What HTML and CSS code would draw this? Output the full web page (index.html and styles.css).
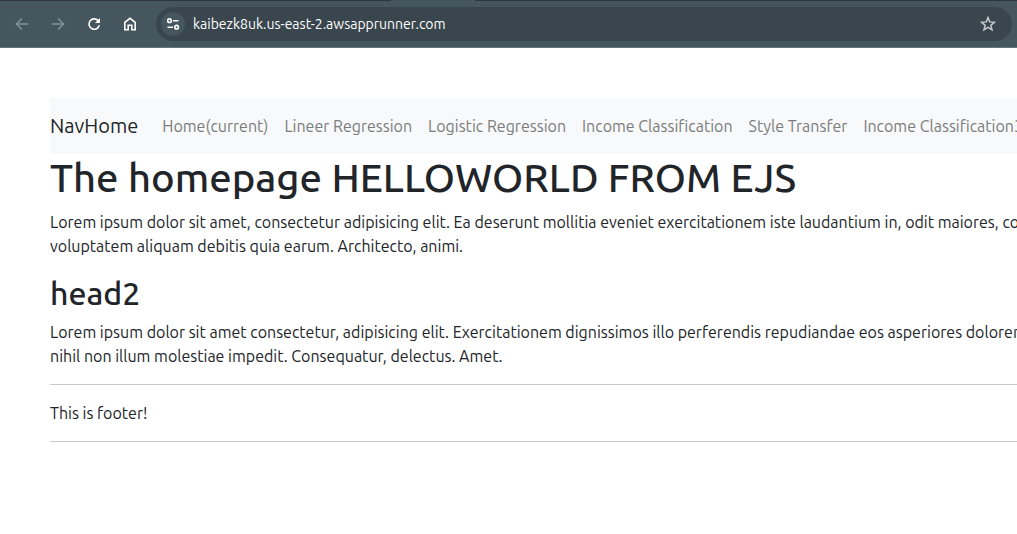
FILE: index.html
```html
<!DOCTYPE html>
<html lang="en">
<head>
<meta charset="utf-8">
<meta name="viewport" content="width=device-width, initial-scale=1">
<title>NavHome</title>
<link rel="stylesheet" href="styles.css">
</head>
<body>
<header class="browser">
  <div class="tab-strip"><div class="active-tab"></div></div>
  <div class="toolbar">
    <button class="tool dim" type="button" aria-label="Back"><svg viewBox="0 0 16 16"><path d="M14 8H3M8 2.5 2.5 8 8 13.5"/></svg></button>
    <button class="tool dim" type="button" aria-label="Forward"><svg viewBox="0 0 16 16"><path d="M2 8h11M8 2.5 13.500 8 8 13.500"/></svg></button>
    <button class="tool" type="button" aria-label="Reload"><svg viewBox="0 0 16 16"><path d="M13.300 9.200A5.200 5.200 0 1 1 11.900 4.400L13 5.500"/><path class="solid" d="M14 2v5H9z"/></svg></button>
    <button class="tool" type="button" aria-label="Home"><svg viewBox="0 0 16 16"><path d="M2.800 6.300 8 2.300l5.200 4v7.500H9.800V9.300H6.200v4.500H2.800z"/></svg></button>
    <div class="address">
      <button class="site-info" type="button" aria-label="Site information"><svg viewBox="0 0 16 16"><circle cx="4.500" cy="4.700" r="1.800"/><path d="M8 4.700h5.500M2.500 11.200H8"/><circle cx="11.600" cy="11.200" r="1.800"/></svg></button>
      <input class="url" type="text" aria-label="Address" value="kaibezk8uk.us-east-2.awsapprunner.com">
      <button class="star" type="button" aria-label="Bookmark"><svg viewBox="0 0 16 16"><path d="m8 1.600 1.700 4.300 4.700.400-3.600 3 1.200 4.600L8 11.400l-4 2.500 1.200-4.600-3.600-3 4.700-.400z"/></svg></button>
    </div>
  </div>
</header>
<div class="page">
  <nav class="navbar">
    <a class="brand" href="#">NavHome</a>
    <a class="nav-link" href="#">Home(current)</a>
    <a class="nav-link" href="#">Lineer Regression</a>
    <a class="nav-link" href="#">Logistic Regression</a>
    <a class="nav-link" href="#">Income Classification</a>
    <a class="nav-link" href="#">Style Transfer</a>
    <a class="nav-link" href="#">Income Classification3</a>
  </nav>
  <main>
    <h1 class="title">The homepage HELLOWORLD FROM EJS</h1>
    <p class="text">Lorem ipsum dolor sit amet, consectetur adipisicing elit. Ea deserunt mollitia eveniet exercitationem iste laudantium in, odit maiores, co<br>voluptatem aliquam debitis quia earum. Architecto, animi.</p>
    <h2 class="subtitle">head2</h2>
    <p class="text">Lorem ipsum dolor sit amet consectetur, adipisicing elit. Exercitationem dignissimos illo perferendis repudiandae eos asperiores dolorem<br>nihil non illum molestiae impedit. Consequatur, delectus. Amet.</p>
  </main>
  <footer class="footer">This is footer!</footer>
</div>
</body>
</html>
```
FILE: styles.css
```css
* {
  box-sizing: border-box;
}

body {
  margin: 0;
  background: #fff;
  color: #212529;
  font: 16px/24px Ubuntu, "Noto Sans", sans-serif;
  overflow-x: hidden;
}

.browser {
  background: #45565f;
  border-bottom: 1px solid #64747d;
}

.tab-strip {
  height: 1px;
  padding-left: 391px;
  background: #2c363c;
}

.active-tab {
  width: 84px;
  height: 1px;
  background: #45565f;
}

.toolbar {
  display: flex;
  align-items: center;
  gap: 16px;
  padding: 6px 5px 6px 12px;
}

button {
  display: flex;
  flex: none;
  align-items: center;
  justify-content: center;
  padding: 0;
  border: 0;
  background: none;
  color: #fff;
}

svg {
  width: 16px;
  height: 16px;
  fill: none;
  stroke: currentColor;
  stroke-width: 1.6;
}

.solid {
  fill: currentColor;
  stroke: none;
}

.tool {
  width: 20px;
  height: 20px;
}

.dim {
  color: #829097;
}

.address {
  display: flex;
  flex: 1;
  align-items: center;
  gap: 8px;
  height: 34px;
  padding: 0 16px 0 5px;
  border-radius: 17px;
  background: #39464d;
}

.site-info {
  width: 24px;
  height: 24px;
  border-radius: 50%;
  background: #45565f;
}

.url {
  flex: 1;
  min-width: 0;
  padding: 0;
  border: 0;
  outline: 0;
  background: none;
  color: #fff;
  font: 14px/20px Ubuntu, "Noto Sans", sans-serif;
}

.star {
  color: #c4c8ca;
}

.star svg {
  stroke-width: 1.5;
}

.page {
  padding: 50px 0 50px 50px;
  overflow: hidden;
  white-space: nowrap;
}

.navbar {
  display: flex;
  align-items: center;
  gap: 16px;
  height: 56px;
  background: #f8f9fa;
}

.brand {
  margin-right: 8px;
  color: #212529;
  font-size: 20px;
  text-decoration: none;
}

.nav-link {
  color: #7b7c7d;
  text-decoration: none;
}

.title,
.subtitle {
  margin: 0 0 8px;
  font-weight: 500;
}

.title {
  font-size: 40px;
  line-height: 48px;
}

.subtitle {
  font-size: 32px;
  line-height: 38px;
}

.text {
  margin: 0 0 16px;
}

.footer {
  padding: 16px 0;
  border-top: 1px solid #c7c8c9;
  border-bottom: 1px solid #c7c8c9;
}
```
